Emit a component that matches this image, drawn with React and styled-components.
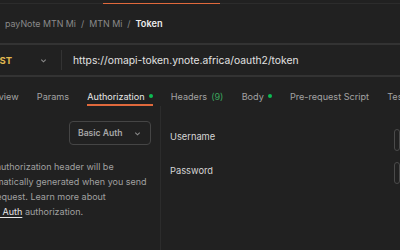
import styled, { createGlobalStyle } from 'styled-components';

const Global = createGlobalStyle`
  html, body {
    margin: 0;
    background: #212121;
  }
  body {
    font-family: Inter, "Noto Sans", sans-serif;
    -webkit-font-smoothing: antialiased;
  }
`;

const Frame = styled.div`
  width: 400px;
  height: 250px;
  overflow: hidden;
  background: #212121;
  display: flex;
  flex-direction: column;
`;

const TabStrip = styled.div`
  height: 3px;
  border-bottom: 1px solid #2c2c2c;
  display: flex;
  align-items: flex-end;
`;

const OpenTab = styled.div`
  margin-left: 103px;
  width: 117px;
  height: 1px;
  background: #e0693c;
  margin-bottom: -1px;
`;

const Crumbs = styled.div`
  height: 39px;
  display: flex;
  align-items: center;
  gap: 5px;
  padding-left: 5px;
  font-size: 8.9px;
  color: #8a8a8a;
`;

const Crumb = styled.span`
  color: ${p => (p.$current ? '#ececec' : '#8a8a8a')};
  font-weight: ${p => (p.$current ? 600 : 400)};
  font-size: ${p => (p.$current ? '9.2px' : 'inherit')};
`;

const UrlBar = styled.div`
  height: 30px;
  border-top: 2px solid #333;
  border-bottom: 2px solid #333;
  display: flex;
  align-items: center;
`;

const Method = styled.div`
  width: 76px;
  height: 20px;
  margin-left: -14px;
  padding-right: 13px;
  box-sizing: border-box;
  display: flex;
  align-items: center;
  justify-content: space-between;
  border-right: 1px solid #333;
  color: #e0b84f;
  font-weight: 700;
  font-size: 9.5px;
`;

const Url = styled.div`
  padding-left: 11px;
  font-size: 10.3px;
  color: #e2e2e2;
`;

const Tabs = styled.div`
  height: 29px;
  display: flex;
  align-items: stretch;
  gap: 18.2px;
  margin-left: -22px;
`;

const Tab = styled.div`
  display: flex;
  align-items: center;
  gap: 4px;
  padding-top: 11px;
  box-sizing: border-box;
  border-bottom: 2px solid ${p => (p.$active ? '#e0693c' : 'transparent')};
  font-size: 9.1px;
  color: ${p => (p.$active ? '#e8e8e8' : '#a3a3a3')};
  white-space: nowrap;
`;

const Count = styled.span`
  color: #3ba55c;
`;

const Dot = styled.span`
  width: 4px;
  height: 4px;
  border-radius: 50%;
  background: #0cbb52;
`;

const Body = styled.div`
  flex: 1;
  display: flex;
`;

const Side = styled.div`
  width: 161px;
  flex: none;
  border-right: 1px solid #2c2c2c;
  overflow: hidden;
  display: flex;
  flex-direction: column;
  align-items: flex-end;
  padding: 15px 9px 0 0;
  box-sizing: border-box;
`;

const Select = styled.div`
  width: 82px;
  height: 24px;
  box-sizing: border-box;
  border: 1px solid #454545;
  border-radius: 4px;
  display: flex;
  align-items: center;
  justify-content: space-between;
  padding: 0 8px;
  font-size: 8.6px;
  font-weight: 600;
  color: #a8a8a8;
`;

const Note = styled.p`
  align-self: flex-start;
  margin: 14px 0 0 -23px;
  width: 172px;
  font-size: 9px;
  line-height: 15px;
  color: #a0a0a0;
`;

const Link = styled.span`
  color: #e6e6e6;
  text-decoration: underline;
  text-underline-offset: 2px;
  white-space: nowrap;
`;

const Fields = styled.div`
  flex: 1;
  display: grid;
  grid-template-columns: 224px 1fr;
  grid-auto-rows: 22px;
  row-gap: 11px;
  align-items: start;
  padding: 23px 0 0 9px;
`;

const Label = styled.div`
  font-size: 9.3px;
  line-height: 12px;
  padding-top: ${p => (p.$shift ? '3px' : '2px')};
  color: #d6d6d6;
`;

const Input = styled.div`
  height: 22px;
  box-sizing: border-box;
  border: 1px solid #4a4a4a;
  border-radius: 4px;
`;

const Chevron = () => (
  <svg width="9" height="9" viewBox="0 0 10 10" fill="none" stroke="#8a8a8a" strokeWidth="1.2">
    <path d="M2.5 4l2.5 2.5L7.5 4" />
  </svg>
);

export default function App() {
  return (
    <Frame>
      <Global />
      <TabStrip>
        <OpenTab />
      </TabStrip>
      <Crumbs>
        <Crumb>payNote MTN Mi</Crumb>
        <span>/</span>
        <Crumb>MTN Mi</Crumb>
        <span>/</span>
        <Crumb $current>Token</Crumb>
      </Crumbs>
      <UrlBar>
        <Method>
          POST
          <Chevron />
        </Method>
        <Url>https://omapi-token.ynote.africa/oauth2/token</Url>
      </UrlBar>
      <Tabs>
        <Tab>Overview</Tab>
        <Tab>Params</Tab>
        <Tab $active>Authorization <Dot /></Tab>
        <Tab>Headers <Count>(9)</Count></Tab>
        <Tab>Body <Dot /></Tab>
        <Tab>Pre-request Script</Tab>
        <Tab>Tests</Tab>
      </Tabs>
      <Body>
        <Side>
          <Select>
            Basic Auth
            <Chevron />
          </Select>
          <Note>
            The authorization header will be automatically generated when you send the
            request. Learn more about <Link>Basic Auth</Link> authorization.
          </Note>
        </Side>
        <Fields>
          <Label>Username</Label>
          <Input />
          <Label $shift>Password</Label>
          <Input />
        </Fields>
      </Body>
    </Frame>
  );
}
